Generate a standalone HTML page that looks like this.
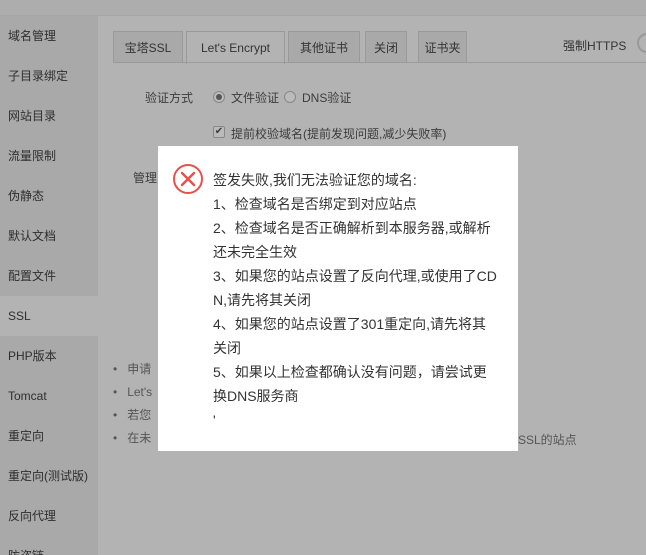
<!DOCTYPE html>
<html><head><meta charset="utf-8"><style>
*{margin:0;padding:0;box-sizing:border-box}
html,body{width:646px;height:555px;overflow:hidden}
body{background:#b3b3b3;font-family:"Liberation Sans","Noto Sans CJK SC",sans-serif;font-size:12px;color:#3c3c3c;position:relative}
.top{position:absolute;left:0;top:0;width:646px;height:16px;background:#adadad;border-bottom:1px solid #a6a6a6}
.side{position:absolute;left:0;top:16px;width:98px;height:539px;background:#a9a9a9;overflow:hidden}
.side div{height:40px;line-height:40px;padding-left:8px;font-size:12px;color:#2e2e2e}
.side .on{background:#b3b3b3}
.tab{position:absolute;top:31px;height:32px;border:1px solid #9a9a9a;border-bottom:none;background:#a9a9a9;line-height:32px;text-align:center;font-size:12px;color:#333}
.tab.on{background:#b3b3b3;height:33px}
.tline{position:absolute;left:113px;top:62px;width:533px;height:1px;background:#9a9a9a}
.abs{position:absolute;white-space:nowrap}
.modal{position:absolute;left:158px;top:146px;width:360px;height:305px;background:#fff}
.msg{position:absolute;left:55px;top:22px;width:300px;font-size:14px;line-height:24px;color:#333;white-space:nowrap}
</style></head><body>
<div class="top"></div>
<div class="side">
<div>域名管理</div><div>子目录绑定</div><div>网站目录</div><div>流量限制</div><div>伪静态</div><div>默认文档</div><div>配置文件</div><div class="on">SSL</div><div>PHP版本</div><div>Tomcat</div><div>重定向</div><div>重定向(测试版)</div><div>反向代理</div><div>防盗链</div>
</div>
<div class="tab" style="left:113px;width:70px">宝塔SSL</div>
<div class="tab on" style="left:186px;width:99px">Let's Encrypt</div>
<div class="tab" style="left:288px;width:72px">其他证书</div>
<div class="tab" style="left:365px;width:42px">关闭</div>
<div class="tab" style="left:418px;width:49px">证书夹</div>
<div class="tline"></div>
<div class="abs" style="left:563px;top:37px;color:#333">强制HTTPS</div>
<div class="abs" style="left:637px;top:33px;width:20px;height:20px;border:2px solid #999;border-radius:10px"></div>
<div class="abs" style="left:145px;top:89px">验证方式</div>
<div class="abs" style="left:213px;top:91px;width:12px;height:12px;border:1px solid #888;border-radius:50%;background:#bbb"><div style="width:6px;height:6px;margin:2px;border-radius:50%;background:#555"></div></div>
<div class="abs" style="left:231px;top:89px">文件验证</div>
<div class="abs" style="left:284px;top:91px;width:12px;height:12px;border:1px solid #888;border-radius:50%;background:#bbb"></div>
<div class="abs" style="left:302px;top:89px">DNS验证</div>
<div class="abs" style="left:213px;top:126px;width:12px;height:12px;border:1px solid #888;border-radius:2px;background:#bbb;font-size:10px;line-height:10px;text-align:center">✔</div>
<div class="abs" style="left:231px;top:125px">提前校验域名(提前发现问题,减少失败率)</div>
<div class="abs" style="left:133px;top:169px">管理</div>
<div class="abs" style="left:113px;top:358px;color:#555;line-height:23px">
<div>•&nbsp;&nbsp;&nbsp;申请</div><div>•&nbsp;&nbsp;&nbsp;Let's</div><div>•&nbsp;&nbsp;&nbsp;若您</div><div>•&nbsp;&nbsp;&nbsp;在未</div></div>
<div class="abs" style="left:518px;top:431px;color:#555">SSL的站点</div>
<div class="modal">
<svg style="position:absolute;left:14px;top:17px" width="32" height="32" viewBox="0 0 32 32"><circle cx="16" cy="16" r="14" fill="none" stroke="#e8504a" stroke-width="2"/><path d="M10 10L22 22M22 10L10 22" stroke="#e8504a" stroke-width="2.4" stroke-linecap="round"/></svg>
<div class="msg">签发失败,我们无法验证您的域名:<br>1、检查域名是否绑定到对应站点<br>2、检查域名是否正确解析到本服务器,或解析<br>还未完全生效<br>3、如果您的站点设置了反向代理,或使用了CD<br>N,请先将其关闭<br>4、如果您的站点设置了301重定向,请先将其<br>关闭<br>5、如果以上检查都确认没有问题，请尝试更<br>换DNS服务商<br><span style="line-height:10px">'</span></div>
</div>
</body></html>
